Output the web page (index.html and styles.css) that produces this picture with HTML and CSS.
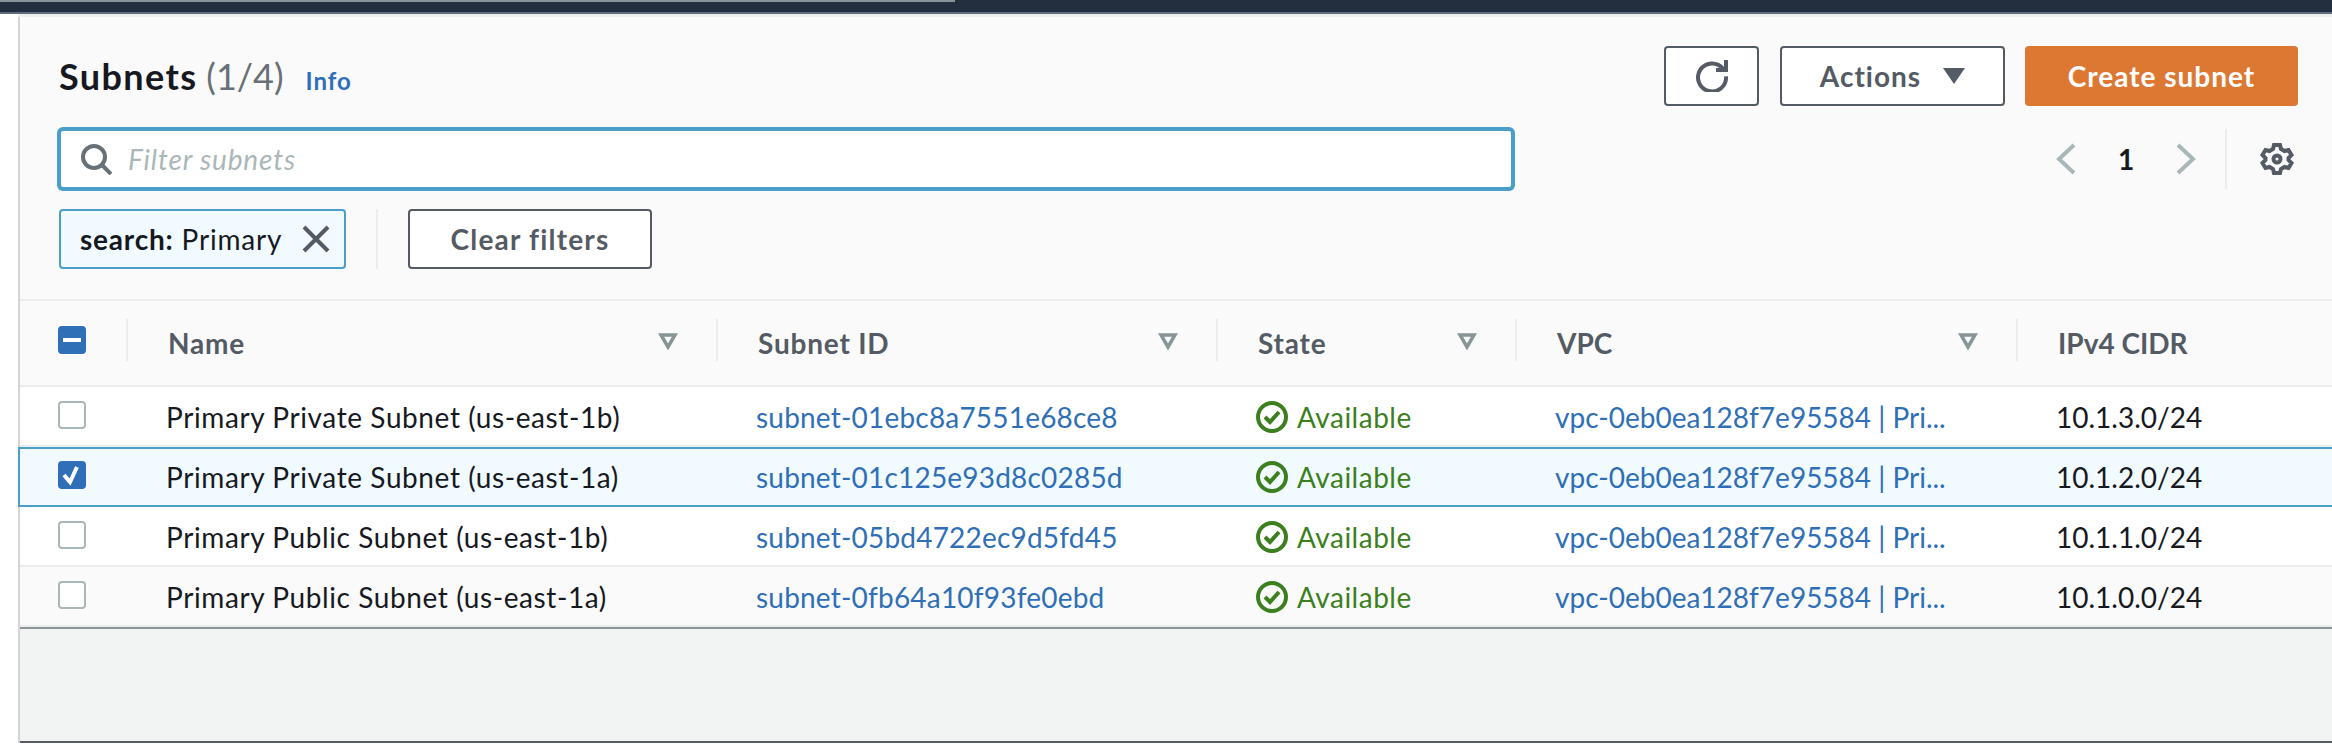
FILE: index.html
```html
<!DOCTYPE html>
<html>
<head>
	<meta charset="utf-8">
	<title>Subnets</title>
	<link rel="stylesheet" href="styles.css">
</head>
<body>
	<div class="topbar"><div class="topbar-tab"></div></div>
	<div class="strip"></div>
	<div class="panel">
		<div class="head">
			<div class="head-row">
				<div class="title">
					<h1><span class="title-name">Subnets</span> <span class="count">(1/4)</span></h1>
					<a class="info">Info</a>
				</div>
				<div class="actions">
					<button class="btn btn-icon">
						<svg width="32" height="32" viewBox="0 0 16 16" fill="none" stroke="#545b64" stroke-width="2"><path d="M13.600 4.500A7 7 0 1 0 15 8.200"/><path d="M10 5h5V0"/></svg>
					</button>
					<button class="btn btn-actions">Actions <svg width="22" height="16" viewBox="0 0 22 16"><path d="M0 0h22L11 16z" fill="#545b64"/></svg></button>
					<button class="btn btn-primary">Create subnet</button>
				</div>
			</div>
			<div class="filter-row">
				<div class="search">
					<svg width="32" height="32" viewBox="0 0 16 16" fill="none" stroke="#687078" stroke-width="2"><circle cx="7" cy="7" r="5.500"/><path d="M11 11l4.500 4.500"/></svg>
					<span class="placeholder">Filter subnets</span>
				</div>
				<div class="pager">
					<svg width="20" height="32" viewBox="0 0 20 32" fill="none" stroke="#aab7b8" stroke-width="4"><path d="M18 2L3 16l15 14"/></svg>
					<span class="page-no">1</span>
					<svg width="20" height="32" viewBox="0 0 20 32" fill="none" stroke="#aab7b8" stroke-width="4"><path d="M2 2l15 14L2 30"/></svg>
					<div class="pager-sep">
						<svg width="34" height="34" viewBox="0 0 34 34" fill="none" stroke="#545b64" stroke-width="4"><path d="M14 3h6l1 4 3.500 2 4-1 3 5-3 3v2l3 3-3 5-4-1-3.500 2-1 4h-6l-1-4-3.500-2-4 1-3-5 3-3v-2l-3-3 3-5 4 1 3.500-2z"/><circle cx="17" cy="17" r="3.500"/></svg>
					</div>
				</div>
			</div>
			<div class="token-row">
				<div class="token">
					<span class="token-text"><b>search:</b> Primary</span>
					<svg width="28" height="28" viewBox="0 0 28 28" fill="none" stroke="#545b64" stroke-width="4"><path d="M2 2l24 24M26 2L2 26"/></svg>
				</div>
				<div class="token-sep"></div>
				<button class="btn btn-clear">Clear filters</button>
			</div>
		</div>

		<div class="row row-head">
			<div class="cell-check"><span class="cb cb-on"><svg width="28" height="28" viewBox="0 0 28 28"><path d="M5 14h18" stroke="#fff" stroke-width="4"/></svg></span></div>
			<div class="th"><span class="th-text">Name</span> <svg class="caret" width="20" height="17" viewBox="0 0 20 17" fill="none" stroke="#879596" stroke-width="3.500"><path d="M3 2h14l-7 12z"/></svg></div>
			<div class="th"><span class="th-text">Subnet ID</span> <svg class="caret" width="20" height="17" viewBox="0 0 20 17" fill="none" stroke="#879596" stroke-width="3.500"><path d="M3 2h14l-7 12z"/></svg></div>
			<div class="th"><span class="th-text">State</span> <svg class="caret" width="20" height="17" viewBox="0 0 20 17" fill="none" stroke="#879596" stroke-width="3.500"><path d="M3 2h14l-7 12z"/></svg></div>
			<div class="th"><span>VPC</span> <svg class="caret" width="20" height="17" viewBox="0 0 20 17" fill="none" stroke="#879596" stroke-width="3.500"><path d="M3 2h14l-7 12z"/></svg></div>
			<div class="th th-last"><span>IPv4 CIDR</span></div>
		</div>

		<div class="row">
			<div class="cell-check"><span class="cb"></span></div>
			<div class="cell name">Primary Private Subnet (us-east-1b)</div>
			<div class="cell"><a class="subnet">subnet-01ebc8a7551e68ce8</a></div>
			<div class="status"><svg width="32" height="32" viewBox="0 0 32 32" fill="none" stroke="#3b7f1e" stroke-width="4"><circle cx="16" cy="16" r="14"/><path d="M9 16l5 5 9-10"/></svg>Available</div>
			<div class="cell"><a>vpc-0eb0ea128f7e95584 | Pri...</a></div>
			<div class="cell">10.1.3.0/24</div>
		</div>
		<div class="row row-sel">
			<div class="cell-check"><span class="cb cb-on"><svg width="28" height="28" viewBox="0 0 28 28" fill="none"><path d="M6 14l6 7 7-15" stroke="#fff" stroke-width="4"/></svg></span></div>
			<div class="cell name">Primary Private Subnet (us-east-1a)</div>
			<div class="cell"><a class="subnet">subnet-01c125e93d8c0285d</a></div>
			<div class="status"><svg width="32" height="32" viewBox="0 0 32 32" fill="none" stroke="#3b7f1e" stroke-width="4"><circle cx="16" cy="16" r="14"/><path d="M9 16l5 5 9-10"/></svg>Available</div>
			<div class="cell"><a>vpc-0eb0ea128f7e95584 | Pri...</a></div>
			<div class="cell">10.1.2.0/24</div>
		</div>
		<div class="row">
			<div class="cell-check"><span class="cb"></span></div>
			<div class="cell name">Primary Public Subnet (us-east-1b)</div>
			<div class="cell"><a class="subnet">subnet-05bd4722ec9d5fd45</a></div>
			<div class="status"><svg width="32" height="32" viewBox="0 0 32 32" fill="none" stroke="#3b7f1e" stroke-width="4"><circle cx="16" cy="16" r="14"/><path d="M9 16l5 5 9-10"/></svg>Available</div>
			<div class="cell"><a>vpc-0eb0ea128f7e95584 | Pri...</a></div>
			<div class="cell">10.1.1.0/24</div>
		</div>
		<div class="row row-last">
			<div class="cell-check"><span class="cb"></span></div>
			<div class="cell name">Primary Public Subnet (us-east-1a)</div>
			<div class="cell"><a class="subnet">subnet-0fb64a10f93fe0ebd</a></div>
			<div class="status"><svg width="32" height="32" viewBox="0 0 32 32" fill="none" stroke="#3b7f1e" stroke-width="4"><circle cx="16" cy="16" r="14"/><path d="M9 16l5 5 9-10"/></svg>Available</div>
			<div class="cell"><a>vpc-0eb0ea128f7e95584 | Pri...</a></div>
			<div class="cell">10.1.0.0/24</div>
		</div>
		<div class="foot"></div>
	</div>
</body>
</html>
```

FILE: styles.css
```css
*{box-sizing: border-box;}
body{margin: 0;background: #fff;color: #16191f;font-family: Lato, "Open Sans", sans-serif;font-size: 28px;overflow: hidden;}
a{color: #2f6fb7;}

.topbar{height: 14px;background: #232f3e;border-bottom: 2px solid #5f6b7a;}
.topbar-tab{width: 955px;height: 2px;background: #87959a;}
.strip{height: 3px;background: #eeeeee;margin-left: 18px;}

.panel{margin-left: 18px;border-left: 2px solid #d5d5d5;background: #fafafa;}

.head{height: 284px;padding: 29px 34px 0 39px;border-bottom: 2px solid #eaeded;}
.head-row{display: flex;justify-content: space-between;align-items: center;height: 60px;}
.title{display: flex;align-items: baseline;gap: 22px;}
h1{margin: 0;font-size: 36px;font-weight: 700;}
.title-name{letter-spacing: 1.4px;}
.count{font-weight: 400;color: #687078;}
.info{font-size: 24px;font-weight: 700;letter-spacing: 1px;}

.actions{display: flex;gap: 20px;}
.btn{height: 60px;border: 2px solid #545b64;border-radius: 4px;background: #fff;color: #545b64;font: 700 28px Lato, sans-serif;letter-spacing: 1px;padding: 0;display: flex;align-items: center;justify-content: center;}
.btn-icon{width: 95px;margin-right: 1px;}
.btn-actions{width: 225px;gap: 22px;}
.btn-primary{width: 273px;border: none;background: #dd7833;color: #fff;}
.btn-clear{width: 244px;letter-spacing: 1.2px;}

.filter-row{display: flex;justify-content: space-between;height: 60px;margin-top: 23px;}
.search{width: 1454px;height: 60px;display: flex;align-items: center;gap: 16px;padding-left: 19px;background: #fff;border: 2px solid #4a9fc9;border-radius: 4px;box-shadow: 0 0 0 2px #4a9fc9;}
.placeholder{font-style: italic;color: #aab7b8;letter-spacing: .85px;}

.pager{display: flex;align-items: center;margin-right: 4px;}
.page-no{width: 100px;text-align: center;font-weight: 700;}
.pager-sep{height: 60px;margin-left: 29px;padding-left: 33px;border-left: 2px solid #eaeded;display: flex;align-items: center;}

.token-row{display: flex;margin-top: 20px;}
.token{width: 287px;height: 60px;display: flex;align-items: center;justify-content: space-between;padding: 0 14px 0 19px;background: #f1faff;border: 2px solid #4a9fc9;border-radius: 4px;}
.token-text{letter-spacing: .8px;}
.token-sep{width: 2px;height: 60px;margin: 0 30px;background: #eaeded;}

.row{display: grid;grid-template-columns: 106px 590px 500px 299px 501px 1fr;height: 60px;align-items: center;padding-bottom: 4px;background: #fff;border-top: 2px solid transparent;border-bottom: 2px solid #eaeded;}
.row-head{height: 86px;background: #fafafa;padding-bottom: 6px;border-top: none;}
.row-sel{background: #f1faff;border-color: #4a9fc9;box-shadow: -2px 0 0 #4a9fc9;}
.row-last{background: #fafafa;}

.cell-check{padding-left: 38px;display: flex;}
.cell{padding: 3px 0 0 40px;white-space: nowrap;line-height: 36px;}
.cell a{display: block;}
.name{letter-spacing: .6px;}
.subnet{letter-spacing: .2px;}
.th{height: 42px;display: flex;align-items: center;justify-content: space-between;padding: 6px 38px 0 40px;border-left: 2px solid #eaeded;font-weight: 700;color: #545b64;white-space: nowrap;}
.th .caret{margin-top: -4px;}
.th-text{letter-spacing: .8px;}
.th-last{padding-right: 0;justify-content: flex-start;}

.cb{width: 28px;height: 28px;display: block;background: #fff;border: 2px solid #aab7b8;border-radius: 4px;}
.cb-on{background: #2f6fb7;border: none;}
.cb svg{display: block;}

.status{display: flex;align-items: center;gap: 9px;padding: 4px 0 0 40px;color: #3b7f1e;letter-spacing: .5px;white-space: nowrap;}
.foot{height: 116px;background: #f2f3f3;border-top: 2px solid #8d9799;border-bottom: 2px solid #545b64;}
```
